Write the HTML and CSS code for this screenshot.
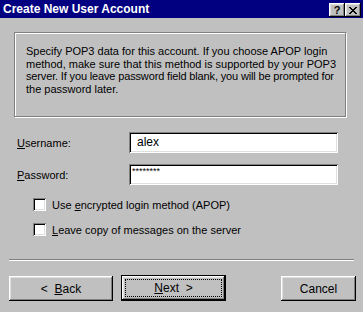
FILE: index.html
```html
<!DOCTYPE html>
<html lang="en">
<head>
    <meta charset="UTF-8">
    <title>Create New User Account</title>
    <link rel="stylesheet" href="styles.css">
</head>
<body>
<div class="dialog">
    <div class="titlebar">
        <span class="title">Create New User Account</span>
        <div class="title-btns">
            <span class="tb-btn help">?</span>
            <span class="tb-btn close">
                <svg width="8" height="7" viewBox="0 0 8 7">
                    <path d="M0 0h2v1h-2zM6 0h2v1h-2zM1 1h2v1h-2zM5 1h2v1h-2zM2 2h4v1h-4zM3 3h2v1h-2zM2 4h4v1h-4zM1 5h2v1h-2zM5 5h2v1h-2zM0 6h2v1h-2zM6 6h2v1h-2z" fill="#000"/>
                </svg>
            </span>
        </div>
    </div>

    <div class="info-box">
        <div>Specify POP3 data for this account. If you choose APOP login</div>
        <div>method, make sure that this method is supported by your POP3</div>
        <div class="tight">server. If you leave password field blank, you will be prompted for</div>
        <div>the password later.</div>
    </div>

    <div class="form-grid">
        <label for="username"><u>U</u>sername:</label>
        <div class="field">alex</div>
        <label for="password"><u>P</u>assword:</label>
        <div class="field password">********</div>
    </div>

    <div class="checks">
        <div class="check-row"><span class="checkbox"></span><span>Use <u>e</u>ncrypted login method (APOP)</span></div>
        <div class="check-row"><span class="checkbox"></span><span><u>L</u>eave copy of messages on the server</span></div>
    </div>

    <div class="separator"></div>

    <div class="buttons">
        <div class="btn back">&lt;&nbsp;&nbsp;<u>B</u>ack</div>
        <div class="btn next default"><span class="focus"><u>N</u>ext&nbsp;&nbsp;&gt;</span></div>
        <div class="btn cancel">Cancel</div>
    </div>
</div>
</body>
</html>
```

FILE: styles.css
```css
body {
    margin: 0;
    background-color: #c0c0c0;
    font-family: "Liberation Sans", Arial, sans-serif;
    font-size: 11px;
    color: #000;
}

.dialog {
    width: 363px;
    height: 312px;
    display: flex;
    flex-direction: column;
}

/* Title bar */
.titlebar {
    height: 18px;
    background-color: #000080;
    display: flex;
    align-items: center;
    padding-left: 3px;
    padding-right: 2px;
}

.title {
    color: #fff;
    font-weight: bold;
    font-size: 12px;
    flex: 1;
}

.title-btns {
    display: flex;
    margin-top: 2px;
}

.tb-btn {
    width: 16px;
    height: 14px;
    box-sizing: border-box;
    background-color: #c0c0c0;
    display: flex;
    align-items: center;
    justify-content: center;
    box-shadow: inset -1px -1px #000, inset 1px 1px #fff, inset -2px -2px #808080, inset 2px 2px #dfdfdf;
}

.tb-btn.help {
    font-weight: bold;
    font-size: 11px;
    line-height: 14px;
}

/* Info box */
.info-box {
    margin: 14px 17px 0 14px;
    height: 85px;
    box-sizing: border-box;
    border: 1px solid #808080;
    box-shadow: 1px 1px 0 #fff, inset 1px 1px 0 #fff;
    padding: 12px 0 0 11px;
    line-height: 12.5px;
    white-space: nowrap;
}

.info-box .tight {
    letter-spacing: -0.15px;
}

/* Form */
.form-grid {
    display: grid;
    grid-template-columns: 112px 209px;
    row-gap: 11px;
    margin: 15px 0 0 17px;
    align-items: center;
}

.field {
    height: 21px;
    box-sizing: border-box;
    background-color: #fff;
    padding: 0 0 0 8px;
    line-height: 20px;
    font-size: 12px;
    box-shadow: inset 1px 1px #808080, inset -1px -1px #fff, inset 2px 2px #000, inset -2px -2px #dfdfdf;
}

.field.password {
    padding-left: 3px;
    font-size: 9px;
    line-height: 14px;
}

.checks {
    display: flex;
    flex-direction: column;
    gap: 12px;
    margin: 13px 0 0 33px;
}

.check-row {
    display: flex;
    align-items: center;
    gap: 6px;
    height: 13px;
}

.checkbox {
    width: 13px;
    height: 13px;
    box-sizing: border-box;
    background-color: #fff;
    box-shadow: inset 1px 1px #808080, inset -1px -1px #fff, inset 2px 2px #000, inset -2px -2px #dfdfdf;
}

.separator {
    margin: 23px 9px 0 9px;
    border-top: 1px solid #808080;
    border-bottom: 1px solid #fff;
    height: 0;
}

/* Buttons */
.buttons {
    display: flex;
    margin: 15px 7px 0 9px;
    gap: 8px;
}

.btn {
    height: 25px;
    box-sizing: border-box;
    display: flex;
    align-items: center;
    justify-content: center;
    font-size: 12px;
    box-shadow: inset -1px -1px #000, inset 1px 1px #fff, inset -2px -2px #808080, inset 2px 2px #dfdfdf;
}

.btn.back {
    width: 104px;
}

.btn.next {
    width: 105px;
    height: 26px;
    margin-top: -1px;
}

.btn.default {
    border: 1px solid #000;
}

.btn .focus {
    display: flex;
    align-items: center;
    justify-content: center;
    width: calc(100% - 6px);
    height: calc(100% - 6px);
    box-sizing: border-box;
    border: 1px dotted #000;
}

.btn.cancel {
    width: 75px;
    margin-left: auto;
}
```
